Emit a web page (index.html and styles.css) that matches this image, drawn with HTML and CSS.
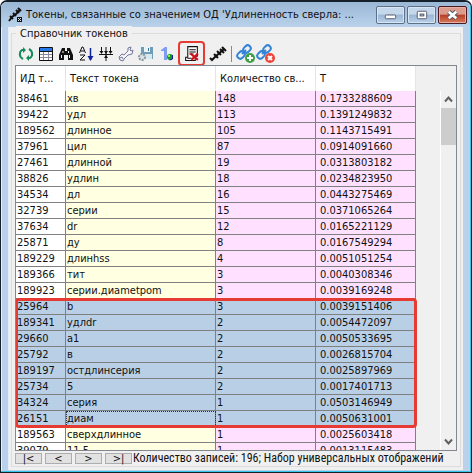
FILE: index.html
```html
<!DOCTYPE html>
<html lang="ru">
<head>
<meta charset="utf-8">
<title>Токены</title>
<link rel="stylesheet" href="styles.css">
</head>
<body>
<main class="window">
  <header class="titlebar">
    <svg class="app-icon" viewBox="0 0 16 16" aria-hidden="true"><path d="M1 14l3-4 4-3 4-4" stroke="#111" stroke-width="2" fill="none"/><path d="M2 9l3 3M5 6l3 3M8 3l3 3M10 1l3 3" stroke="#111" stroke-width="2"/><path d="M9 10h5v5H9z" fill="#111"/><path d="M10 11l3 3m0-3l-3 3" stroke="#dce9f5"/></svg>
    <h1>Токены, связанные со значением ОД 'Удлиненность сверла: ...</h1>
    <div class="caption-buttons">
      <button aria-label="Свернуть"><svg viewBox="0 0 28 17"><rect x="8.500" y="8.500" width="11" height="4" rx="1" fill="#fff" stroke="#535666"/></svg></button>
      <button aria-label="Развернуть"><svg viewBox="0 0 28 17"><rect x="9.500" y="4.500" width="10" height="8" rx="1" fill="#fff" stroke="#535666"/><rect x="12.500" y="7.500" width="4" height="2" fill="#a9c2de" stroke="#535666"/></svg></button>
      <button class="close" aria-label="Закрыть"><svg viewBox="0 0 28 17"><path d="M10 5l8 7m0-7l-8 7" stroke="#535666" stroke-width="5"/><path d="M10 5l8 7m0-7l-8 7" stroke="#fff" stroke-width="3"/></svg></button>
    </div>
  </header>
  <div class="client">
  <fieldset class="group">
    <legend>Справочник токенов</legend>
    <div class="toolbar">
      <button aria-label="Обновить"><svg viewBox="0 0 16 16" fill="none" stroke="#178a5c" stroke-width="2"><path d="M5 13C1 11 1 6 4 4h3M11 3c4 2 4 7 1 9H9"/><path d="M5 1l3 3-3 3zM11 9l-3 3 3 3z" fill="#178a5c" stroke="none"/></svg></button>
      <button aria-label="Таблица"><svg viewBox="0 0 16 16"><path d="M1.500 1.500h13v13h-13z" fill="#fff" stroke="#111"/><path d="M2 2h12v3H2z" fill="#2878e8"/><path d="M1 5.500h14" stroke="#111"/><path d="M2 8.500h12M2 11.500h12M5.500 6v8M10.500 6v8" stroke="#889"/></svg></button>
      <button aria-label="Найти"><svg viewBox="0 0 16 16"><path d="M4 2h3v3h2V2h3l3 7v5h-5V9H6v5H1V9z" fill="#111"/><path d="M3.500 9v3M11.500 9v3M5 5v2M10.500 5v2" stroke="#eee"/></svg></button>
      <button aria-label="Сортировать"><svg viewBox="0 0 16 16" fill="none"><path d="M1.500 7L4 1h1l2.500 6M3 5h3M2 9h5l-5 5h5" stroke="#111"/><path d="M12.500 2v12" stroke="#11249c" stroke-width="1.500"/><path d="M9.500 10h6l-3 5z" fill="#11249c"/></svg></button>
      <button aria-label="Ширина столбцов"><svg viewBox="0 0 16 16"><path d="M1 8.500h14M3.500 1v5M8 1v14M12.500 1v5" stroke="#111"/><path d="M1.500 5h4l-2 3zM10.500 5h4l-2 3zM6 5h4L8 8zM6 12h4l-2-3z" fill="#111"/></svg></button>
      <button aria-label="Настройки"><svg viewBox="0 0 16 16"><path d="M2 14l-1-3 3-3 2 1 4-4V2l3-1-1 3 1 1 2-1-1 4-4 1-4 4-1 2z" fill="#f5f5fa" stroke="#72769b"/><path d="M2 12l2-1 1 2" stroke="#72769b" fill="none"/></svg></button>
      <button aria-label="Сохранить настройки"><svg viewBox="0 0 16 16"><path d="M3 1h12v12H3z" fill="#6f9cb7"/><path d="M6 1h6v5H6z" fill="#e8f3fa"/><path d="M10 2h1v3h-1z" fill="#3f7191"/><path d="M6 8h8v5H6z" fill="#d8e8f1"/><circle cx="4" cy="11" r="3" fill="#dce1e3" stroke="#8799a3" stroke-width="2" stroke-dasharray="2 1"/></svg></button>
      <button aria-label="Первый"><svg viewBox="0 0 16 16"><path d="M3 4l4-3h2v13H6V5H3z" fill="#7e9df3"/><circle cx="12" cy="11" r="3" fill="#159b23"/><circle cx="11" cy="10" r="1" fill="#b8ff55"/><path d="M14.500 9v4l-3 1" stroke="#11249c" fill="none"/></svg></button>
      <button class="marked" aria-label="Удалить записи"><svg viewBox="0 0 16 16"><path d="M4.500 1.500h9v9h-2v4h-9v-3h2z" fill="#fff" stroke="#111"/><path d="M6 4.500h6M6 6.500h6M6 8.500h4M4 12.500h4" stroke="#111"/><path d="M7 8l7 6m0-6l-6 6" stroke="#d70f16" stroke-width="2"/></svg></button>
      <button class="link-tokens" aria-label="Связи токенов"><svg viewBox="0 0 18 16"><path d="M1 12l2 2 3-3 9-8" stroke="#111" stroke-width="2" fill="none"/><path d="M5 8l4 4M8 5l4 4M11 3l4 4M13 1l4 4" stroke="#111" stroke-width="2"/></svg></button>
      <span class="separator"></span>
      <button class="wide" aria-label="Добавить связь"><svg viewBox="0 0 20 20"><g fill="none" stroke="#3284d8" stroke-width="2"><rect x="1" y="8" width="8" height="6" rx="3" transform="rotate(-45 5 11)"/><rect x="7" y="2" width="8" height="6" rx="3" transform="rotate(-45 11 5)"/><path d="M6 10l4-4"/></g><circle cx="14" cy="14" r="5" fill="#3f9f46"/><path d="M11 14h6M14 11v6" stroke="#fff" stroke-width="2"/></svg></button>
      <button class="wide" aria-label="Удалить связь"><svg viewBox="0 0 20 20"><g fill="none" stroke="#3284d8" stroke-width="2"><rect x="1" y="8" width="8" height="6" rx="3" transform="rotate(-45 5 11)"/><rect x="7" y="2" width="8" height="6" rx="3" transform="rotate(-45 11 5)"/><path d="M6 10l4-4"/></g><circle cx="14" cy="14" r="5" fill="#ee4338"/><path d="M12 12l4 4m0-4l-4 4" stroke="#fff" stroke-width="2"/></svg></button>
    </div>
    <div class="grid-frame">
      <div class="grid-view">
      <table>
        <colgroup><col class="c-id"><col class="c-text"><col class="c-count"><col class="c-t"></colgroup>
        <thead><tr><th>ИД т...</th><th>Текст токена</th><th>Количество св...</th><th>T</th></tr></thead>
        <tbody>
          <tr><td>38461</td><td>хв</td><td>148</td><td>0.1733288609</td></tr>
          <tr><td>39422</td><td>удл</td><td>113</td><td>0.1391249832</td></tr>
          <tr><td>189562</td><td>длинное</td><td>105</td><td>0.1143715491</td></tr>
          <tr><td>37961</td><td>цил</td><td>87</td><td>0.0914091660</td></tr>
          <tr><td>27461</td><td>длинной</td><td>19</td><td>0.0313803182</td></tr>
          <tr><td>38826</td><td>удлин</td><td>18</td><td>0.0234823950</td></tr>
          <tr><td>34534</td><td>дл</td><td>16</td><td>0.0443275469</td></tr>
          <tr><td>32739</td><td>серии</td><td>15</td><td>0.0371065264</td></tr>
          <tr><td>37634</td><td>dr</td><td>12</td><td>0.0165221129</td></tr>
          <tr><td>25871</td><td>ду</td><td>8</td><td>0.0167549294</td></tr>
          <tr><td>189229</td><td>длинhss</td><td>4</td><td>0.0051051254</td></tr>
          <tr><td>189366</td><td>тит</td><td>3</td><td>0.0040308346</td></tr>
          <tr><td>189923</td><td>серии.диаmetpom</td><td>3</td><td>0.0039169248</td></tr>
        </tbody>
        <tbody class="selected">
          <tr><td>25964</td><td>b</td><td>3</td><td>0.0039151406</td></tr>
          <tr><td>189341</td><td>удлdr</td><td>2</td><td>0.0054472097</td></tr>
          <tr><td>29660</td><td>a1</td><td>2</td><td>0.0050533695</td></tr>
          <tr><td>25792</td><td>в</td><td>2</td><td>0.0026815704</td></tr>
          <tr><td>189197</td><td>остдлинсерия</td><td>2</td><td>0.0025897969</td></tr>
          <tr><td>25734</td><td>5</td><td>2</td><td>0.0017401713</td></tr>
          <tr><td>34324</td><td>серия</td><td>1</td><td>0.0503146949</td></tr>
          <tr><td>26151</td><td class="current">диам</td><td>1</td><td>0.0050631001</td></tr>
        </tbody>
        <tbody>
          <tr><td>189563</td><td>сверхдлинное</td><td>1</td><td>0.0025603418</td></tr>
          <tr><td>39079</td><td>11.5</td><td>1</td><td>0.0013115483</td></tr>
        </tbody>
      </table>
      </div>
      <div class="scrollbar">
        <button aria-label="Вверх"><svg viewBox="0 0 15 16"><path d="M4 10l3.500-4 3.500 4" fill="none" stroke="#606060" stroke-width="2"/></svg></button>
        <span class="thumb"></span>
        <button class="down" aria-label="Вниз"><svg viewBox="0 0 15 16"><path d="M4 6l3.500 4L11 6" fill="none" stroke="#606060" stroke-width="2"/></svg></button>
      </div>
    </div>
    <footer class="status">
      <button>|&lt;</button><button>&lt;</button><button>&gt;</button><button>&gt;|</button>
      <span>Количество записей: 196; Набор универсальных отображений</span>
    </footer>
  </fieldset>
  </div>
</main>
</body>
</html>
```
FILE: styles.css
```css
* { box-sizing: border-box; }
body { margin: 0; font: 11px/15px "DejaVu Sans Condensed", "DejaVu Sans", sans-serif; font-stretch: condensed; color: #111; background: #fff; }
button { padding: 0; border: 0; background: none; font: inherit; color: inherit; }
svg { display: block; width: 100%; height: 100%; }

.window { display: flex; flex-direction: column; height: 100vh; padding: 0 8px 2px 7px; border: 1px solid #16202a; border-top-width: 2px; border-radius: 7px 7px 0 0; background: #b9d1ea; box-shadow: inset -1px -1px #35c5e8, inset 1px 1px #e8f3fc; }
.titlebar { display: flex; align-items: center; height: 25px; flex: none; margin: 0 -7px; padding: 0 3px 0 7px; background: linear-gradient(#9ab7d5, #bad2eb); border-radius: 6px 6px 0 0; }
.app-icon { width: 16px; height: 16px; flex: none; margin-right: 2px; }
h1 { flex: 1; min-width: 0; margin: 0; white-space: nowrap; font-size: 11px; font-weight: normal; line-height: 20px; }
.caption-buttons { display: flex; gap: 2px; }
.caption-buttons button { width: 29px; height: 18px; border: 1px solid #5c7187; border-radius: 2px; background: linear-gradient(#c4d7eb 45%, #99b6d5 50%, #b9d1ea); box-shadow: inset 0 0 0 1px #d8e6f4; }
.caption-buttons .close { border-color: #4c1922; background: linear-gradient(#dc9c8d 45%, #b83d25 50%, #d47b59); box-shadow: inset 0 0 0 1px #e4b0a2; }

.client { display: flex; flex: 1; min-height: 0; padding: 0 2px 3px; background: #f0f0f0; border: 1px solid #e4edf6; border-width: 0 0 0 1px; }
.group { position: relative; display: flex; flex: 1; flex-direction: column; min-width: 0; margin: 6px 0 0; padding: 0 3px 1px; border: 1px solid #dcdcdc; }
legend { position: absolute; top: -8px; left: 4px; padding: 0 4px; background: #f0f0f0; }

.toolbar { display: flex; flex: none; align-items: center; gap: 4px; height: 31px; padding: 8px 0 0 3px; }
.toolbar button { flex: none; width: 16px; height: 16px; }
.toolbar .marked { width: 27px; height: 25px; padding: 2px 3px; border: 2px solid #e53b32; border-radius: 4px; }
.toolbar .link-tokens { width: 18px; }
.toolbar .wide { width: 20px; height: 20px; margin-right: -4px; }
.separator { width: 1px; height: 16px; background: #888; }

.grid-frame { display: flex; flex: 1; min-height: 0; border: 1px solid #828790; overflow: hidden; }
.grid-view { flex: 1; min-width: 0; overflow: hidden; }
table { width: 400px; table-layout: fixed; border-collapse: separate; border-spacing: 0; }
.c-id { width: 50px; }
.c-text { width: 150px; }
.c-count, .c-t { width: 100px; }
th { height: 25px; padding: 0 0 0 4px; border-right: 1px solid #e5e5e5; background: #fff; text-align: left; font-weight: normal; white-space: nowrap; }
td { height: 16px; padding: 0 0 0 1px; border: solid #808080; border-width: 0 1px 1px 0; background: #fff; white-space: nowrap; }
td:nth-child(2) { background: #ffffe1; }
td:nth-child(3), td:nth-child(4) { background: #ffe1ff; }
td:nth-child(4) { padding-left: 4px; }
.selected { position: relative; outline: 3px solid #e53b32; outline-offset: -2px; border-radius: 3px; }
.selected td:nth-child(n) { background: #b9cfe6; }
.selected .current { outline: 1px dotted #333; outline-offset: -1px; }

.scrollbar { display: flex; flex-direction: column; width: 16px; margin-top: 25px; border-left: 1px solid #fff; }
.scrollbar button { width: 15px; height: 17px; }
.thumb { height: 37px; background: #cdcdcd; }
.scrollbar .down { margin-top: auto; }

.status { display: flex; flex: none; align-items: center; gap: 3px; height: 14px; white-space: nowrap; }
.status button { flex: none; width: 27px; height: 11px; border: 1px solid #adadad; background: #e1e1e1; line-height: 9px; }
.status span { margin-left: -2px; font-family: Roboto, sans-serif; font-size: 12px; }
```
